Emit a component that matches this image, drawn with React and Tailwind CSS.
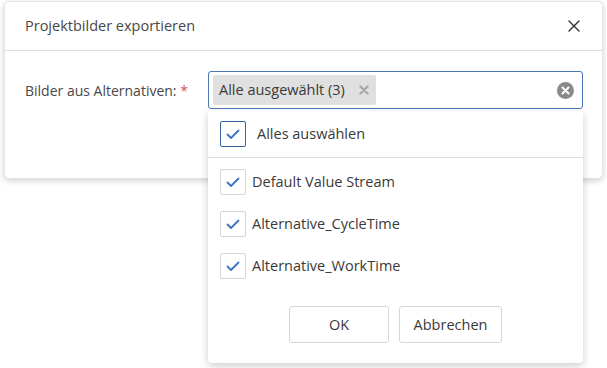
import { X } from "lucide-react";

const items = ["Default Value Stream", "Alternative_CycleTime", "Alternative_WorkTime"];

function Check({ strong }) {
  return (
    <span
      className={
        "flex h-[26px] w-[26px] shrink-0 items-center justify-center rounded-[2px] border bg-white " +
        (strong ? "border-[#3a5f9c]" : "border-[#d6d6d6]")
      }
    >
      <svg width="14" height="11" viewBox="0 0 14 11" fill="none">
        <path d="M1.5 5.5 L5 9 L12.5 1.5" stroke="#3d72c4" strokeWidth="1.8" strokeLinecap="round" strokeLinejoin="round" />
      </svg>
    </span>
  );
}

export default function App() {
  return (
    <div className="h-[368px] w-[607px] overflow-hidden bg-white pl-[4px] pt-[1px] text-[#3a3a3a] [font-family:'Open_Sans',sans-serif]">
      <div className="h-[178px] w-[599px] rounded-[5px] border border-[#e4e4e4] bg-white shadow-[0_2px_6px_rgba(0,0,0,0.18)]">
        {/* kopf */}
        <div className="flex h-[49px] items-center justify-between border-b border-[#dcdcdc] pl-[20px] pr-[18px]">
          <span className="text-[14.5px] text-[#484848]">Projektbilder exportieren</span>
          <X size={20} strokeWidth={1.6} className="text-[#333]" />
        </div>
        {/* inhalt */}
        <div className="flex items-center pl-[20px] pt-[20px]">
          <span className="w-[183px] text-[14px] text-[#484848]">
            Bilder aus Alternativen: <span className="text-[#d9534f]">*</span>
          </span>
          <div className="relative w-[375px]">
            <div className="flex h-[38px] items-center justify-between rounded-[3px] border border-[#4a76b8] bg-white pl-[4px] pr-[8px]">
              <span className="flex h-[30px] items-center gap-[14px] rounded-[2px] bg-[#e0e0e0] pl-[6px] pr-[7px] text-[14.5px]">
                Alle ausgewählt (3)
                <svg width="10" height="10" viewBox="0 0 10 10">
                  <path d="M1.5 1.5 L8.5 8.5 M8.5 1.5 L1.5 8.5" stroke="#a8a8a8" strokeWidth="2.4" strokeLinecap="round" />
                </svg>
              </span>
              <svg width="17" height="17" viewBox="0 0 17 17">
                <circle cx="8.5" cy="8.5" r="8.5" fill="#8a8a8a" />
                <path d="M5.5 5.5 L11.5 11.5 M11.5 5.5 L5.5 11.5" stroke="#fff" strokeWidth="2" strokeLinecap="round" />
              </svg>
            </div>
            {/* auswahlliste */}
            <div className="absolute left-0 right-0 top-[40px] h-[252px] rounded-b-[4px] bg-white shadow-[0_3px_8px_rgba(0,0,0,0.2)]">
              <div className="flex h-[47px] items-center gap-[11px] border-b border-[#dedede] px-[12px]">
                <Check strong />
                <span className="text-[14.5px]">Alles auswählen</span>
              </div>
              <div className="flex flex-col gap-[16px] px-[12px] pt-[11px]">
                {items.map((name) => (
                  <div key={name} className="flex items-center gap-[6px]">
                    <Check />
                    <span className="text-[14.5px]">{name}</span>
                  </div>
                ))}
              </div>
              <div className="flex justify-center gap-[10px] pt-[27px]">
                <button className="h-[37px] w-[100px] rounded-[3px] border border-[#d6d6d6] bg-white text-[14.5px]">
                  OK
                </button>
                <button className="h-[37px] w-[103px] rounded-[3px] border border-[#d6d6d6] bg-white text-[14.5px]">
                  Abbrechen
                </button>
              </div>
            </div>
          </div>
        </div>
      </div>
    </div>
  );
}
